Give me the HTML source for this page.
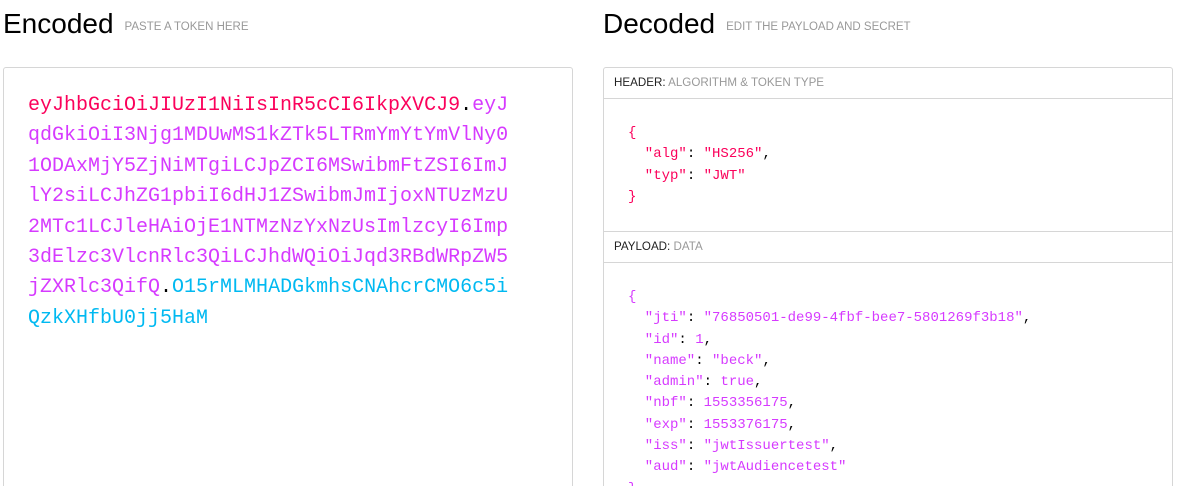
<!DOCTYPE html><html><head><style>
html,body{margin:0;width:1194px;height:486px;overflow:hidden}
body{background:#fff;font-family:"Liberation Sans",sans-serif;position:relative}
.h{position:absolute;top:8px;font-size:28px;color:#000;white-space:nowrap}
.h small{font-size:11.5px;color:#999;margin-left:11px;vertical-align:3px}
.box{position:absolute;border:1px solid #d6d6d6;border-radius:3px;background:#fff}
.tok{position:absolute;font-family:"Liberation Mono",monospace;font-size:20px;line-height:30.4px;white-space:pre;color:#d63aff}
.r{color:#fb015b}.c{color:#00b9f1}.k{color:#000}
.lab{position:absolute;left:0;right:0;height:30px;border-bottom:1px solid #d6d6d6;font-size:11.6px;color:#222;padding-left:10px;line-height:30px}
.lab span{color:#999}
.js{position:absolute;left:24px;font-family:"Liberation Mono",monospace;font-size:14px;line-height:21.3px;white-space:pre;color:#333}
</style></head><body>
<div class="h" style="left:3px">Encoded<small>PASTE A TOKEN HERE</small></div>
<div class="h" style="left:603px">Decoded<small>EDIT THE PAYLOAD AND SECRET</small></div>
<div class="box" style="left:3px;top:67px;width:568px;height:440px">
<div class="tok" style="left:24px;top:23px"><span class="r">eyJhbGciOiJIUzI1NiIsInR5cCI6IkpXVCJ9</span><span class="k">.</span>eyJ
qdGkiOiI3Njg1MDUwMS1kZTk5LTRmYmYtYmVlNy0
1ODAxMjY5ZjNiMTgiLCJpZCI6MSwibmFtZSI6ImJ
lY2siLCJhZG1pbiI6dHJ1ZSwibmJmIjoxNTUzMzU
2MTc1LCJleHAiOjE1NTMzNzYxNzUsImlzcyI6Imp
3dElzc3VlcnRlc3QiLCJhdWQiOiJqd3RBdWRpZW5
jZXRlc3QifQ<span class="k">.</span><span class="c">O15rMLMHADGkmhsCNAhcrCMO6c5i</span>
<span class="c">QzkXHfbU0jj5HaM</span></div>
</div>
<div class="box" style="left:603px;top:67px;width:568px;height:440px">
<div class="lab" style="top:0">HEADER: <span>ALGORITHM &amp; TOKEN TYPE</span></div>
<div class="js" style="top:55px;color:#fb015b">{
  "alg"<span class="k">: </span>"HS256"<span class="k">,</span>
  "typ"<span class="k">: </span>"JWT"
}</div>
<div class="lab" style="top:163px;border-top:1px solid #d6d6d6">PAYLOAD: <span>DATA</span></div>
<div class="js" style="top:219px;color:#d63aff">{
  "jti"<span class="k">: </span>"76850501-de99-4fbf-bee7-5801269f3b18"<span class="k">,</span>
  "id"<span class="k">: </span>1<span class="k">,</span>
  "name"<span class="k">: </span>"beck"<span class="k">,</span>
  "admin"<span class="k">: </span>true<span class="k">,</span>
  "nbf"<span class="k">: </span>1553356175<span class="k">,</span>
  "exp"<span class="k">: </span>1553376175<span class="k">,</span>
  "iss"<span class="k">: </span>"jwtIssuertest"<span class="k">,</span>
  "aud"<span class="k">: </span>"jwtAudiencetest"
}</div>
</div>
</body></html>
